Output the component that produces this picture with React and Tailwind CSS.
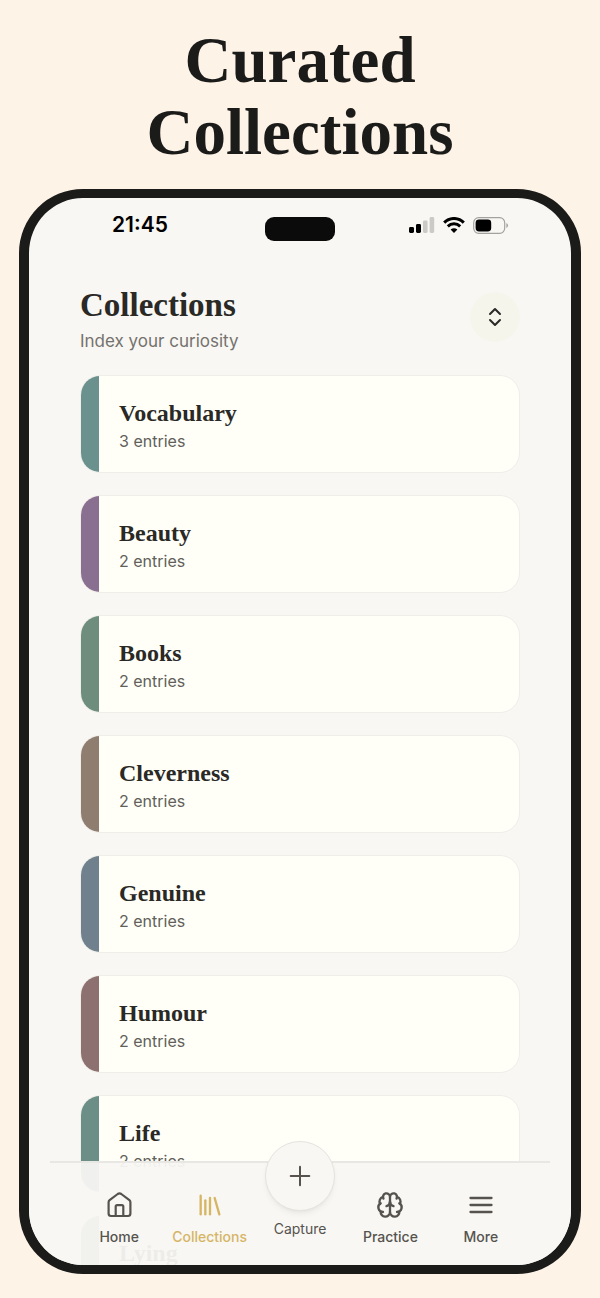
import React from "react";
import { Brain, ChevronsUpDown, Library, Plus } from "lucide-react";

const collections = [
  { name: "Vocabulary", count: 3, color: "bg-[#6a918e]" },
  { name: "Beauty", count: 2, color: "bg-[#8a7090]" },
  { name: "Books", count: 2, color: "bg-[#6f8d7c]" },
  { name: "Cleverness", count: 2, color: "bg-[#8f7d70]" },
  { name: "Genuine", count: 2, color: "bg-[#70808d]" },
  { name: "Humour", count: 2, color: "bg-[#8d7070]" },
  { name: "Life", count: 2, color: "bg-[#6b8e86]" },
  { name: "Lying", color: "bg-[#70808d]" },
];

function HomeIcon() {
  return (
    <svg className="size-7" viewBox="0 0 28 28" fill="none" stroke="currentColor" strokeWidth="2.2" strokeLinecap="round" strokeLinejoin="round">
      <path d="M12.7 3 4.6 9.2Q3.6 10 3.6 11.2V22.6Q3.6 25 6 25H23Q25.4 25 25.4 22.6V11.2Q25.4 10 24.4 9.2L16.3 3Q14.5 1.7 12.7 3Z" />
      <path d="M10.7 25V15.6Q10.7 14.2 12.1 14.2H16.9Q18.3 14.2 18.3 15.6V25" />
    </svg>
  );
}

function MenuIcon() {
  return (
    <svg className="size-7" viewBox="0 0 24 24" fill="none" stroke="currentColor" strokeWidth="2" strokeLinecap="round">
      <path d="M3 6h18M3 12h18M3 18h18" />
    </svg>
  );
}

function StatusBar() {
  return (
    <div className="grid grid-cols-[1fr_70px_1fr] items-start px-[21px] pt-[15px]">
      <span className="pl-[62px] font-['Inter'] text-[21px] leading-6 font-semibold text-black">21:45</span>
      <div className="mt-1 h-6 rounded-[9px] bg-[#0b0b0b]" />
      <div className="flex h-6 items-center justify-end gap-2 pr-[41px]">
        {/* signal */}
        <svg className="h-4 w-[26px]" viewBox="0 0 26 16">
          <rect x="0" y="10" width="5" height="6" rx="1.4" fill="#000" />
          <rect x="7" y="7" width="5" height="9" rx="1.4" fill="#000" />
          <rect x="14" y="3.5" width="4.6" height="12.5" rx="1.4" fill="#cbcac6" />
          <rect x="20.6" y="0" width="4.6" height="16" rx="1.4" fill="#cbcac6" />
        </svg>
        {/* wifi */}
        <svg className="h-4 w-[22px]" viewBox="0 0 22 16" fill="none" stroke="#000" strokeWidth="3">
          <path d="M1.2 5.6C6.6 .1 15.4 .1 20.8 5.6" />
          <path d="M4.8 9.3C8.3 6 13.7 6 17.2 9.3" />
          <path d="M11 16 7.6 12.6Q11 9.8 14.4 12.6Z" fill="#000" stroke="none" />
        </svg>
        {/* battery */}
        <svg className="h-[17px] w-9" viewBox="0 0 36 17">
          <rect x=".7" y=".7" width="31" height="15.6" rx="5" fill="none" stroke="#a3a29f" strokeWidth="1.2" />
          <rect x="2.6" y="2.6" width="15.6" height="11.8" rx="3.4" fill="#000" />
          <path d="M33.4 6v5q1.6-.6 1.6-2.5T33.4 6Z" fill="#a3a29f" />
        </svg>
      </div>
    </div>
  );
}

function CollectionCard({ name, count, color }) {
  return (
    <li>
      <a href="#" className="flex h-[98px] overflow-hidden rounded-[20px] border border-[#efeee8] bg-[#fffff8]">
        <span className={`w-[18px] shrink-0 ${color}`} />
        <span className="flex flex-col pt-[21px] pl-5">
          <span className="font-['Liberation_Serif'] text-2xl leading-8 font-bold text-[#2a2926]">{name}</span>
          {count && <span className="font-['Inter'] text-base leading-6 text-[#625f5b]">{count} entries</span>}
        </span>
      </a>
    </li>
  );
}

function NavItem({ icon, label, active }) {
  return (
    <a href="#" className={`flex flex-1 flex-col items-center gap-2 pt-7 ${active ? "text-[#d6b565]" : "text-[#56534e]"}`}>
      {icon}
      <span className="text-sm leading-5 font-medium">{label}</span>
    </a>
  );
}

function App() {
  return (
    <div className="flex h-screen flex-col bg-[#fdf3e7] px-[19px] py-6">
      <h1 className="mx-auto max-w-sm text-center font-['Liberation_Serif'] text-[65px] leading-[72px] font-bold text-[#1b1b1a]">
        Curated Collections
      </h1>

      <main className="relative mt-[21px] min-h-0 flex-1 overflow-hidden rounded-[64px] border-x-10 border-y-9 border-[#1b1b1a] bg-[#f8f7f3]">
        <StatusBar />

        <header className="mt-11 flex items-center justify-between px-[51px]">
          <div>
            <h2 className="font-['Liberation_Serif'] text-[33px] leading-10 font-bold text-[#2a2926]">Collections</h2>
            <p className="mt-1 font-['Inter'] text-[17px] leading-6 text-[#75726e]">Index your curiosity</p>
          </div>
          <button aria-label="Sort collections" className="mb-1 flex size-[50px] items-center justify-center rounded-full bg-[#f6f5ec] text-[#2a2926]">
            <ChevronsUpDown className="size-6" strokeWidth={2} />
          </button>
        </header>

        <ul className="mt-[22px] flex flex-col gap-[22px] px-[51px]">
          {collections.map((item) => (
            <CollectionCard key={item.name} {...item} />
          ))}
        </ul>

        {/* the tab bar floats over the list */}
        <nav className="absolute inset-x-0 bottom-0 h-[104px] bg-[#f8f7f3]/95 px-[21px] font-['Inter']">
          <div className="flex h-full border-t-2 border-[#e8e7e3] px-6">
            <NavItem icon={<HomeIcon />} label="Home" />
            <NavItem icon={<Library className="size-7" strokeWidth={2} />} label="Collections" active />
            <button className="-mt-[22px] flex flex-1 flex-col items-center gap-2 text-[#56534e]">
              <span className="flex size-[70px] items-center justify-center rounded-full border border-[#e4e3de] bg-[#f8f7f3] shadow-md shadow-black/5">
                <Plus className="size-8" strokeWidth={1.5} />
              </span>
              <span className="text-sm leading-5">Capture</span>
            </button>
            <NavItem icon={<Brain className="size-7" strokeWidth={2} />} label="Practice" />
            <NavItem icon={<MenuIcon />} label="More" />
          </div>
        </nav>
      </main>
    </div>
  );
}

export default App;
